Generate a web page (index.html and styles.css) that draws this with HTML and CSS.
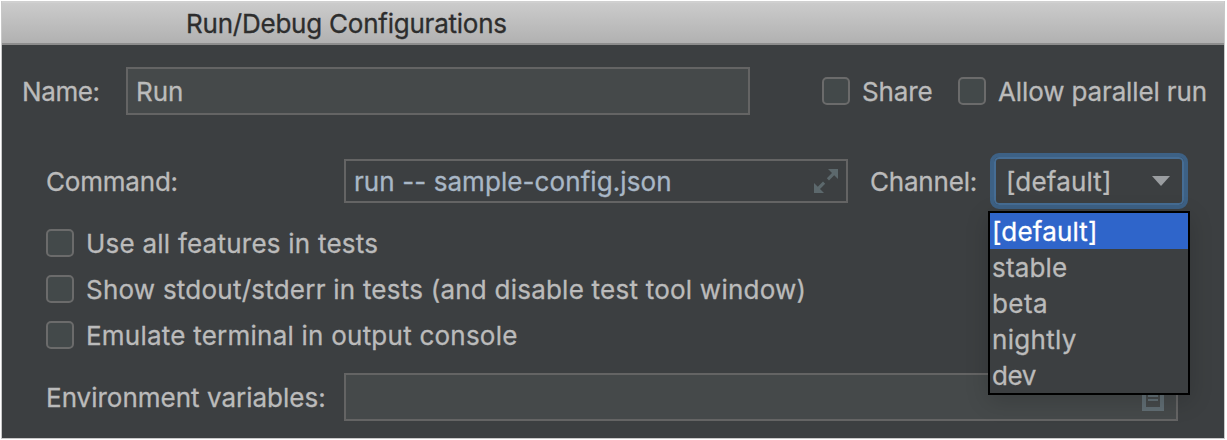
FILE: index.html
```html
<!DOCTYPE html>
<html lang="en">
<head>
<meta charset="utf-8">
<title>Run/Debug Configurations</title>
<link rel="stylesheet" href="styles.css">
</head>
<body>
<div class="window">
  <header class="titlebar"><span class="title">Run/Debug Configurations</span></header>
  <main class="form">
    <div class="row row-name">
      <label class="label name-label">Name:</label>
      <div class="field name-field"><span class="text">Run</span></div>
      <label class="check share"><span class="box"></span><span class="text">Share</span></label>
      <label class="check parallel"><span class="box"></span><span class="text">Allow parallel run</span></label>
    </div>
    <div class="row row-command">
      <label class="label command-label">Command:</label>
      <div class="field command-field">
        <span class="text">run -- sample-config.json</span>
        <svg class="expand" width="24" height="24" viewBox="0 0 24 24">
          <path d="M14 0H24V10L20.2 6.2L15 11.4L12.8 9.2L18 4Z"/>
          <path d="M10 24H0V14L3.8 17.8L9 12.6L11.2 14.8L6 20Z"/>
        </svg>
      </div>
      <label class="label channel-label">Channel:</label>
      <div class="combo">
        <span class="text">[default]</span>
        <svg class="arrow" width="18" height="10" viewBox="0 0 18 10"><path d="M0 0H18L9 10Z"/></svg>
        <ul class="popup">
          <li class="option selected">[default]</li>
          <li class="option">stable</li>
          <li class="option beta">beta</li>
          <li class="option nightly">nightly</li>
          <li class="option dev">dev</li>
        </ul>
      </div>
    </div>
    <div class="checks">
      <label class="check wide"><span class="box"></span><span class="text">Use all features in tests</span></label>
      <label class="check wide"><span class="box"></span><span class="text">Show stdout/stderr in tests (and disable test tool window)</span></label>
      <label class="check wide"><span class="box"></span><span class="text">Emulate terminal in output console</span></label>
    </div>
    <div class="row row-env">
      <label class="label env-label">Environment variables:</label>
      <div class="field env-field">
        <svg class="list" width="22" height="26" viewBox="0 0 22 26">
          <path class="frame" d="M2 2H20V24H2Z"/>
          <path class="lines" d="M6 7H16M6 11H16M6 15H16"/>
        </svg>
      </div>
    </div>
  </main>
</div>
</body>
</html>
```
FILE: styles.css
```css
* { box-sizing: border-box; }

body {
  margin: 0;
  background: #fff;
  color: #bbb;
  font: 26px/36px Inter, "Liberation Sans", sans-serif;
  -webkit-text-stroke: 0.3px;
  white-space: nowrap;
}

.window {
  width: 1224px;
  height: 438px;
  margin: 1px 0 0 1px;
  border: 1px solid #c8c8c8;
  border-top: 0;
  background: #3c3f41;
}

.titlebar {
  height: 44px;
  padding: 4px 0 0 184px;
  border-top: 2px solid #d0d0d0;
  border-bottom: 2px solid #8d8d8d;
  background: linear-gradient(#cbcbcb, #b1b1b1);
  color: #2d2d2d;
  line-height: 34px;
  letter-spacing: -0.23px;
}

.form { padding: 22px 0 0 20px; }

.row { display: flex; align-items: center; }

.label { flex: none; }

.label, .text { padding-top: 2px; }

.field {
  flex: none;
  display: flex;
  align-items: center;
  border: 2px solid #646464;
  background: #45494a;
}

.check { display: flex; align-items: center; gap: 12px; height: 28px; }

.box {
  flex: none;
  width: 28px;
  height: 28px;
  border: 2px solid #6b6b6b;
  border-radius: 5px;
  background: #43494a;
}

.row-name { height: 48px; }
.name-label { width: 104px; letter-spacing: -0.4px; }
.name-field { width: 624px; height: 48px; padding-left: 8px; letter-spacing: -0.1px; }
.share { width: 136px; margin-left: 72px; letter-spacing: -0.1px; }
.parallel { letter-spacing: -0.13px; }

.row-command { height: 56px; margin: 38px 0 20px; padding-left: 24px; }
.command-label { width: 298px; letter-spacing: -0.2px; }
.command-field {
  width: 504px;
  height: 44px;
  padding: 0 8px;
  justify-content: space-between;
  background: #3c3f41;
  color: #a9b7c6;
  letter-spacing: 0.08px;
}
.expand { fill: #5c686c; }
.channel-label { width: 120px; margin-left: 22px; letter-spacing: -0.2px; }

.combo {
  position: relative;
  display: flex;
  align-items: center;
  justify-content: space-between;
  width: 198px;
  height: 56px;
  padding: 0 14px 0 12px;
  border: 4px solid #3d6185;
  border-radius: 9px;
  box-shadow: inset 0 0 0 2px #466d94;
  letter-spacing: 0.17px;
}
.arrow { fill: #9a9da0; }

.popup {
  position: absolute;
  z-index: 1;
  top: 54px;
  left: -6px;
  width: 202px;
  margin: 0;
  padding: 0;
  border: 2px solid #000;
  background: #3c3f41;
  box-shadow: 0 6px 22px rgba(0, 0, 0, 0.16);
  list-style: none;
}
.option { height: 36px; padding-left: 2px; line-height: 38px; }
.selected { background: #2f65ca; color: #fff; }
.beta { letter-spacing: 0.4px; }
.nightly { letter-spacing: 0.3px; }
.dev { letter-spacing: -0.4px; }

.checks { display: grid; gap: 18px; padding-left: 24px; }
.wide { letter-spacing: 0.23px; }

.row-env { height: 48px; margin-top: 24px; padding-left: 24px; }
.env-label { width: 298px; }
.env-field { width: 834px; height: 48px; padding: 2px 12px 0; justify-content: flex-end; }
.list { fill: none; }
.frame { stroke: #606d73; stroke-width: 4; }
.lines { stroke: #606d73; stroke-width: 2; }
```
